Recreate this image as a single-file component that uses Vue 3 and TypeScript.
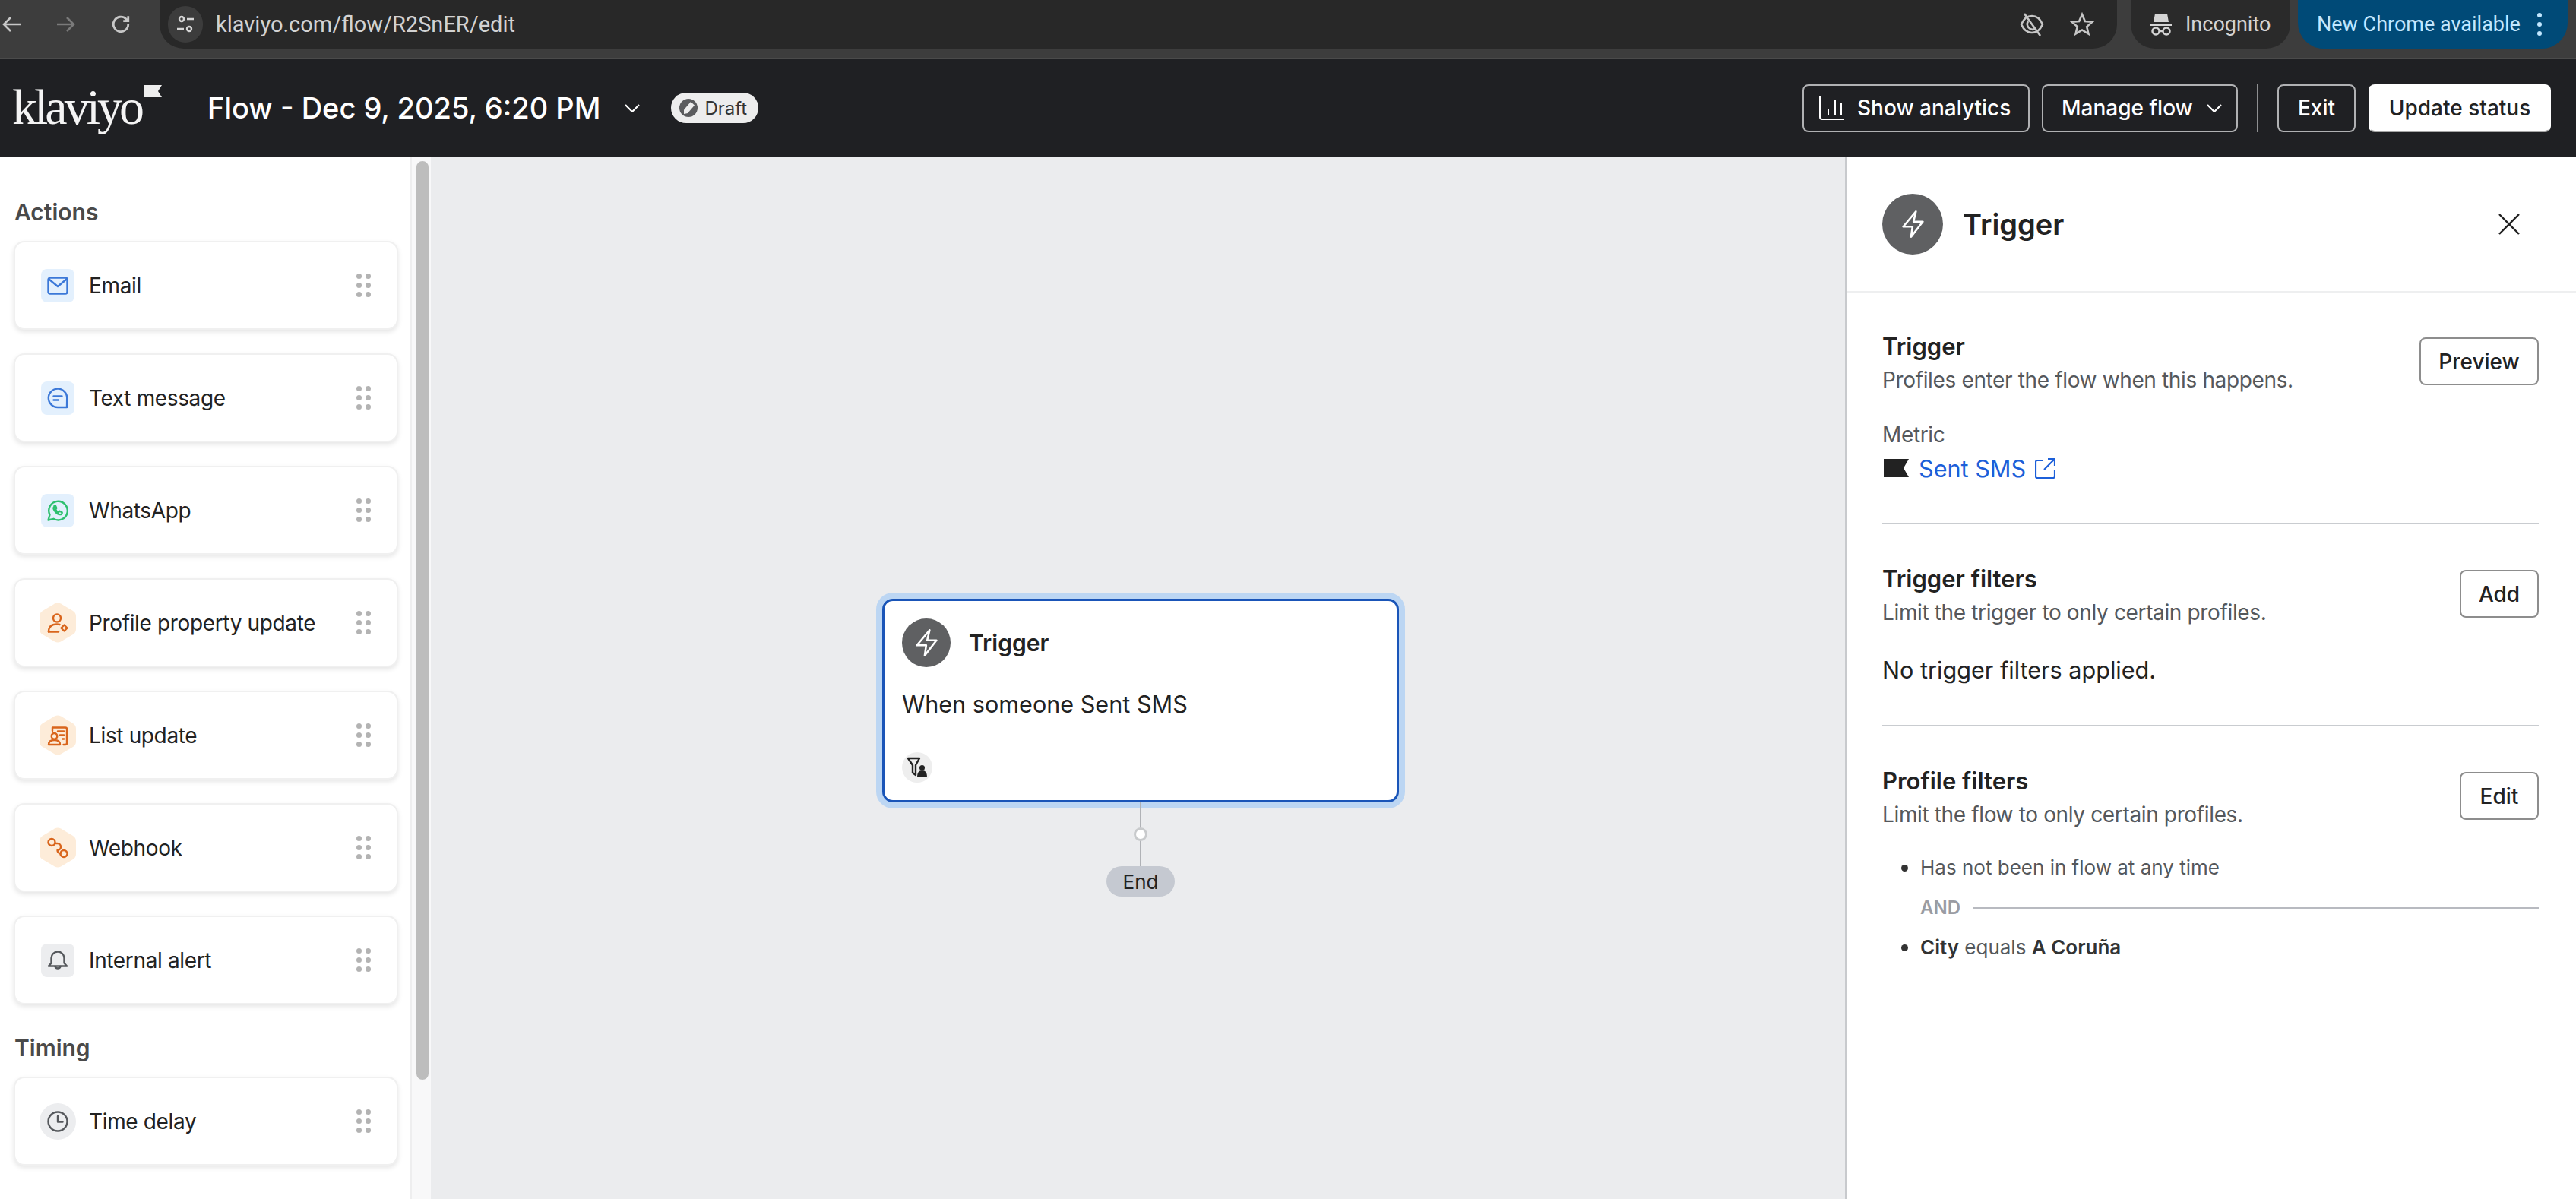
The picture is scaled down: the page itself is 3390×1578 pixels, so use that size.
<template>
  <div class="page">
    <!-- browser toolbar -->
    <div class="chrome">
      <div class="nav">
        <svg class="nav-ico back" viewBox="0 0 26 24"><path d="M25 12H3M12 3l-9 9 9 9" /></svg>
        <svg class="nav-ico fwd" viewBox="0 0 26 24"><path d="M1 12h22M14 3l9 9-9 9" /></svg>
        <svg class="nav-ico reload" viewBox="0 0 24 24"><path d="M21 12a9 9 0 1 1-2.6-6.4L21 8M21 2v6h-6" /></svg>
      </div>
      <div class="omnibox">
        <span class="site-chip">
          <svg viewBox="0 0 24 24" width="24" height="24"><circle cx="7" cy="5" r="3" /><path d="M14 5h9M1 18h9" /><circle cx="17" cy="18" r="3" /></svg>
        </span>
        <span class="url">klaviyo.com/flow/R2SnER/edit</span>
        <svg class="omni-ico" viewBox="0 0 36 32" width="36" height="32"><path d="M4 16c3-7 8-11 14-11s11 4 14 11c-3 7-8 11-14 11S7 23 4 16zM8 2l21 29M13 12a7 7 0 0 0 9 10" /></svg>
        <svg class="omni-ico star" viewBox="0 0 32 32" width="32" height="32"><path d="M16 3l3.9 9 9.6.8-7.3 6.3 2.2 9.4L16 23.4l-8.4 5.1 2.2-9.4-7.3-6.3 9.6-.8z" /></svg>
      </div>
      <div class="incognito">
        <svg viewBox="0 0 28 32" width="28" height="32"><path class="fill" d="M6 2h16l2 11H4zM0 15h28v3H0z" /><circle cx="7" cy="25" r="4.5" /><circle cx="21" cy="25" r="4.5" /><path d="M11.5 25h5" /></svg>
        <span>Incognito</span>
      </div>
      <div class="update-pill">
        <span>New Chrome available</span>
        <span class="kebab"><i></i><i></i><i></i></span>
      </div>
    </div>

    <!-- app header -->
    <header class="topbar">
      <div class="logo">
        <span class="logo-word">klaviyo</span>
        <svg class="logo-flag" viewBox="0 0 23 16" width="23" height="16"><path d="M0 0h23l-5 8 5 8H0z" /></svg>
      </div>
      <div class="flow-name">Flow - Dec 9, 2025, 6:20 PM</div>
      <svg class="chev name-chev" viewBox="0 0 20 11" width="20" height="11"><path d="M1 1l9 9 9-9" /></svg>
      <div class="draft">
        <span class="draft-dot">
          <svg viewBox="0 0 24 24" width="24" height="24"><path d="M15 4l5 4.500-9 10.500-5 1 0-5.500z" /></svg>
        </span>
        Draft
      </div>
      <div class="top-actions">
        <button class="dark-btn analytics">
          <svg viewBox="0 0 35 34" width="35" height="34"><path d="M2 1v28a3 3 0 0 0 3 3h29M13 19v7M22 6v20M30 11v15" /></svg>
          Show analytics
        </button>
        <button class="dark-btn manage">
          Manage flow
          <svg class="chev" viewBox="0 0 20 11" width="20" height="11"><path d="M1 1l9 9 9-9" /></svg>
        </button>
        <span class="top-sep"></span>
        <button class="dark-btn exit">Exit</button>
        <button class="light-btn">Update status</button>
      </div>
    </header>

    <div class="main">
      <!-- left sidebar -->
      <aside class="sidebar">
        <template v-for="group in groups" :key="group.title">
          <h3 class="group-title">{{ group.title }}</h3>
          <div v-for="item in group.items" :key="item.label" class="action-card">
            <span class="ico-slot">
              <span class="ico" :class="[item.shape, item.tone]">
                <svg viewBox="0 0 28 28" width="28" height="28">
                  <path v-for="d in icons[item.icon]" :key="d" :d="d" />
                </svg>
              </span>
            </span>
            <span class="action-label">{{ item.label }}</span>
            <span class="handle"><i v-for="n in 6" :key="n"></i></span>
          </div>
        </template>
      </aside>
      <div class="scroll-track"><div class="scroll-thumb"></div></div>

      <!-- canvas -->
      <section class="canvas">
        <div class="node">
          <div class="node-head">
            <span class="bolt-circle small">
              <svg viewBox="0 0 24 28" width="31" height="36"><path d="M15 1L2 16.500h9.500L10 27l12-15.500h-9.500z" /></svg>
            </span>
            <span class="node-title">Trigger</span>
          </div>
          <p class="node-text">When someone Sent SMS</p>
          <span class="filter-chip">
            <svg viewBox="0 0 30 30" width="30" height="30">
              <path class="funnel" d="M3 3h15l-5 9v13l-4-3V12z" />
              <path class="person" d="M15 28c0-6 2-9 6.500-9s6.500 3 6.500 9z" /><circle class="person" cx="21.500" cy="15.500" r="3.500" />
            </svg>
          </span>
        </div>
        <div class="connector"><span class="connector-dot"></span></div>
        <div class="end-pill">End</div>
      </section>

      <!-- right panel -->
      <aside class="panel">
        <div class="panel-head">
          <span class="bolt-circle">
            <svg viewBox="0 0 24 28" width="31" height="36"><path d="M15 1L2 16.500h9.500L10 27l12-15.500h-9.500z" /></svg>
          </span>
          <h2 class="panel-title">Trigger</h2>
          <svg class="close" viewBox="0 0 28 28" width="28" height="28"><path d="M1 1l26 26M27 1L1 27" /></svg>
        </div>
        <div class="panel-body">
          <div class="section">
            <div class="section-row">
              <div>
                <h4>Trigger</h4>
                <p class="sub">Profiles enter the flow when this happens.</p>
              </div>
              <button class="outline-btn preview">Preview</button>
            </div>
            <div class="metric-label">Metric</div>
            <div class="metric-value">
              <svg class="k-flag" viewBox="0 0 33 24" width="33" height="24"><path d="M0 0h33l-7 12 7 12H0z" /></svg>
              <a class="link">Sent SMS</a>
              <svg class="ext" viewBox="0 0 27 27" width="27" height="27"><path d="M11 3H3a2 2 0 0 0-2 2v19a2 2 0 0 0 2 2h21a2 2 0 0 0 2-2v-8M17 1h9v9M26 1L12 15" /></svg>
            </div>
          </div>
          <div class="section">
            <div class="section-row">
              <div>
                <h4>Trigger filters</h4>
                <p class="sub">Limit the trigger to only certain profiles.</p>
              </div>
              <button class="outline-btn small-btn">Add</button>
            </div>
            <p class="empty">No trigger filters applied.</p>
          </div>
          <div class="section last">
            <div class="section-row">
              <div>
                <h4>Profile filters</h4>
                <p class="sub">Limit the flow to only certain profiles.</p>
              </div>
              <button class="outline-btn small-btn">Edit</button>
            </div>
            <ul class="filters">
              <li><span class="bullet"></span>Has not been in flow at any time</li>
              <li class="and"><span>AND</span><span class="and-line"></span></li>
              <li><span class="bullet"></span><span><b>City</b> equals <b>A Coruña</b></span></li>
            </ul>
          </div>
        </div>
      </aside>
    </div>
  </div>
</template>

<script setup lang="ts">
interface ActionItem {
  label: string
  icon: string
  shape: 'square' | 'hex' | 'round'
  tone: 'blue' | 'green' | 'orange' | 'grey'
}

const icons: Record<string, string[]> = {
  mail: ['M4 3.500h20a2.500 2.500 0 0 1 2.500 2.500v16a2.500 2.500 0 0 1-2.500 2.500H4A2.500 2.500 0 0 1 1.500 22V6A2.500 2.500 0 0 1 4 3.500z', 'M2.500 5.500L14 15l11.500-9.500'],
  sms: ['M26 26H14A12.200 12.200 0 1 1 26.200 14z', 'M8.500 11.500h11M8.500 16.500h6.500'],
  whatsapp: ['M1.500 26.500l2-7A12.300 12.300 0 1 1 8.500 24.800z', 'M9.500 8.500c-1.500 1.500-1 4 1 6.500s5 4.500 7.500 4c1.500-.5 2-2 1.500-2.800l-3-1.500-1.500 1.500c-1.500-.5-3.500-2.500-4-4l1.300-1.500-1.300-3c-.5-.4-1-.5-1.500.3z'],
  profile: ['M13 2.500a5 5 0 1 1 0 10 5 5 0 0 1 0-10z', 'M2 25.500c0-7 4-10 11-10 1.500 0 2.500.2 3.500.5', 'M2 25.500h13', 'M22.500 16.500l4 4-4 4-4-4z'],
  list: ['M7 8V3.500h17a2 2 0 0 1 2 2V24a2 2 0 0 1-2 2h-2.500', 'M9.500 11a3.800 3.800 0 1 1 0 7.600 3.800 3.800 0 0 1 0-7.600z', 'M2 26c0-4 3-6 7.500-6s7.500 2 7.500 6z', 'M14 8.500h8M17 13.500h5M20 18.500h2'],
  webhook: ['M6 2a4.500 4.500 0 1 1 0 9 4.500 4.500 0 0 1 0-9z', 'M22 17a4.500 4.500 0 1 1 0 9 4.500 4.500 0 0 1 0-9z', 'M10 8h3.500a4.500 4.500 0 0 1 0 9 4.500 4.500 0 0 0 4 4.500'],
  bell: ['M14 2.500a8.500 8.500 0 0 1 8.500 8.500v6.500l3.500 4H2l3.500-4V11A8.500 8.500 0 0 1 14 2.500z', 'M10.500 22a3.700 3.700 0 0 0 7 0'],
  clock: ['M14 1.500a12.500 12.500 0 1 1 0 25 12.500 12.500 0 0 1 0-25z', 'M14 7v7.500h6.500'],
}

const groups: { title: string; items: ActionItem[] }[] = [
  {
    title: 'Actions',
    items: [
      { label: 'Email', icon: 'mail', shape: 'square', tone: 'blue' },
      { label: 'Text message', icon: 'sms', shape: 'square', tone: 'blue' },
      { label: 'WhatsApp', icon: 'whatsapp', shape: 'square', tone: 'green' },
      { label: 'Profile property update', icon: 'profile', shape: 'hex', tone: 'orange' },
      { label: 'List update', icon: 'list', shape: 'hex', tone: 'orange' },
      { label: 'Webhook', icon: 'webhook', shape: 'hex', tone: 'orange' },
      { label: 'Internal alert', icon: 'bell', shape: 'square', tone: 'grey' },
    ],
  },
  {
    title: 'Timing',
    items: [{ label: 'Time delay', icon: 'clock', shape: 'round', tone: 'grey' }],
  },
]
</script>

<style>
html,
body {
  margin: 0;
  overflow: hidden;
}
</style>

<style scoped>
.page {
  width: 3390px;
  height: 1578px;
  display: flex;
  flex-direction: column;
  overflow: hidden;
  font-family: Inter, 'Liberation Sans', sans-serif;
  background: #fff;
}

/* browser toolbar */
.chrome {
  height: 78px;
  box-sizing: border-box;
  flex: none;
  display: flex;
  align-items: flex-start;
  background: #3d3d3d;
  border-bottom: 2px solid #4b4b4b;
}
.nav {
  width: 210px;
  flex: none;
  height: 64px;
  display: flex;
  align-items: center;
  padding-left: 2px;
  box-sizing: border-box;
}
.nav-ico {
  fill: none;
  stroke-width: 2.6;
  stroke: #c7c7c7;
}
.back {
  width: 26px;
  height: 24px;
}
.fwd {
  width: 26px;
  height: 24px;
  margin-left: 46px;
  stroke: #7a7a7a;
}
.reload {
  width: 26px;
  height: 26px;
  margin-left: 46px;
}
.omnibox {
  width: 2576px;
  height: 64px;
  flex: none;
  display: flex;
  align-items: center;
  background: #282828;
  border-radius: 0 0 32px 32px;
  padding-left: 11px;
  padding-right: 30px;
  box-sizing: border-box;
}
.site-chip {
  width: 46px;
  height: 48px;
  border-radius: 24px;
  background: #3c3c3c;
  display: flex;
  align-items: center;
  justify-content: center;
}
.site-chip svg {
  fill: none;
  stroke: #d5d5d5;
  stroke-width: 2.4;
}
.url {
  margin-left: 17px;
  font-family: Roboto, sans-serif;
  font-size: 29px;
  color: #d2d2d2;
  flex: 1;
}
.omni-ico {
  fill: none;
  stroke: #c7c7c7;
  stroke-width: 2.6;
}
.star {
  margin-left: 32px;
}
.incognito {
  margin-left: 18px;
  width: 210px;
  height: 64px;
  flex: none;
  display: flex;
  align-items: center;
  gap: 18px;
  padding-left: 26px;
  box-sizing: border-box;
  background: #2a2a2a;
  border-radius: 0 0 32px 32px;
  font-family: Roboto, sans-serif;
  font-size: 27px;
  color: #d4d4d4;
}
.incognito svg {
  fill: none;
  stroke: #d4d4d4;
  stroke-width: 2.5;
}
.incognito .fill {
  fill: #d4d4d4;
  stroke: none;
}
.update-pill {
  margin-left: 10px;
  width: 355px;
  height: 64px;
  flex: none;
  display: flex;
  align-items: center;
  padding-left: 25px;
  box-sizing: border-box;
  background: #004a77;
  border-radius: 0 0 34px 34px;
  font-family: Roboto, sans-serif;
  font-size: 27px;
  color: #c2e7ff;
}
.kebab {
  margin-left: 22px;
  display: flex;
  flex-direction: column;
  gap: 6px;
}
.kebab i {
  width: 6px;
  height: 6px;
  border-radius: 50%;
  background: #c2e7ff;
}

/* app header */
.topbar {
  height: 128px;
  flex: none;
  display: flex;
  align-items: center;
  background: #1f2023;
  color: #fff;
  padding: 0 33px 0 18px;
  box-sizing: border-box;
}
.logo {
  width: 255px;
  flex: none;
  display: flex;
  align-items: flex-start;
  height: 60px;
}
.logo-word {
  font-family: 'Liberation Serif', serif;
  font-size: 66px;
  line-height: 60px;
  letter-spacing: -4px;
  color: #f4f4f4;
  margin: -1px 0 0 -2px;
}
.logo-flag {
  fill: #eeeeee;
  margin-left: 4px;
}
.flow-name {
  font-size: 38px;
  font-weight: 500;
  white-space: nowrap;
}
.chev {
  fill: none;
  stroke: #fff;
  stroke-width: 2.2;
}
.name-chev {
  margin-left: 32px;
}
.draft {
  margin-left: 41px;
  height: 40px;
  border-radius: 20px;
  background: #ededed;
  color: #333;
  font-size: 24px;
  display: flex;
  align-items: center;
  gap: 9px;
  padding: 0 15px 0 11px;
}
.draft-dot {
  width: 24px;
  height: 24px;
  border-radius: 50%;
  background: #5b5c5e;
  display: flex;
}
.draft-dot svg {
  fill: #ededed;
}
.top-actions {
  margin-left: auto;
  display: flex;
  align-items: center;
}
.dark-btn,
.light-btn {
  height: 63px;
  border-radius: 8px;
  font-family: inherit;
  font-size: 28px;
  font-weight: 500;
  display: flex;
  align-items: center;
  box-sizing: border-box;
  white-space: nowrap;
}
.dark-btn {
  background: transparent;
  color: #fff;
  border: 2px solid #b0b1b3;
}
.analytics {
  width: 299px;
  padding: 0 0 0 19px;
  gap: 16px;
}
.analytics svg {
  fill: none;
  stroke: #fff;
  stroke-width: 2;
}
.manage {
  width: 258px;
  margin-left: 16px;
  padding: 0 0 0 24px;
  gap: 18px;
}
.top-sep {
  width: 2px;
  height: 64px;
  background: #8e8f91;
  margin: 0 25px;
}
.exit {
  width: 103px;
  justify-content: center;
}
.light-btn {
  width: 240px;
  margin-left: 17px;
  justify-content: center;
  background: #fff;
  color: #222;
  border: 2px solid #fff;
  border-bottom-color: #a5a5a5;
}

.main {
  flex: 1;
  display: flex;
  min-height: 0;
}

/* sidebar */
.sidebar {
  width: 542px;
  flex: none;
  box-sizing: border-box;
  padding: 53px 16px 0 18px;
  border-right: 2px solid #eeeeef;
  overflow: hidden;
}
.group-title {
  margin: 0 0 18px 1px;
  font-size: 30px;
  line-height: 40px;
  font-weight: 600;
  color: #4a4a4a;
}
.action-card {
  height: 117px;
  box-sizing: border-box;
  margin-bottom: 31px;
  border: 2px solid #f0f0f0;
  border-radius: 14px;
  background: #fff;
  box-shadow: 0 3px 6px rgba(0, 0, 0, 0.1);
  display: flex;
  align-items: center;
  padding: 0 34px 0 32px;
}
.action-card + .group-title {
  margin-top: 37px;
}
.ico-slot {
  width: 48px;
  display: flex;
  justify-content: center;
  flex: none;
}
.ico {
  display: flex;
  align-items: center;
  justify-content: center;
}
.ico svg {
  fill: none;
  stroke-width: 2.4;
  stroke-linecap: round;
  stroke-linejoin: round;
}
.square {
  width: 44px;
  height: 44px;
  border-radius: 8px;
}
.round {
  width: 48px;
  height: 48px;
  border-radius: 50%;
}
.hex {
  width: 48px;
  height: 53px;
  clip-path: path('M20 1.5Q24 -0.5 28 1.5L44 11Q48 13.5 48 18L48 35Q48 39.5 44 42L28 51.5Q24 53.5 20 51.5L4 42Q0 39.5 0 35L0 18Q0 13.5 4 11Z');
}
.blue {
  background: #e3f0fd;
  stroke: #3b78d8;
}
.green {
  background: #e3f0fd;
  stroke: #2ec06f;
}
.orange {
  background: #fdecd9;
  stroke: #d9651c;
}
.grey {
  background: #ecedef;
  stroke: #55585c;
}
.action-label {
  margin-left: 17px;
  flex: 1;
  font-size: 28px;
  letter-spacing: -0.36px;
  color: #222;
  white-space: nowrap;
}
.handle {
  display: grid;
  grid-template-columns: 7px 7px;
  column-gap: 5px;
  row-gap: 5px;
  flex: none;
}
.handle i {
  width: 7px;
  height: 7px;
  border-radius: 50%;
  background: #b3b3b3;
}

.scroll-track {
  width: 25px;
  flex: none;
  background: #f8f8f9;
}
.scroll-thumb {
  width: 16px;
  height: 1209px;
  margin: 6px 0 0 6px;
  border-radius: 8px;
  background: #bdbdbd;
}

/* canvas */
.canvas {
  flex: 1;
  background: #ebecee;
  display: flex;
  flex-direction: column;
  align-items: center;
  padding: 582px 0 0 7px;
  box-sizing: border-box;
}
.node {
  width: 680px;
  height: 268px;
  flex: none;
  box-sizing: border-box;
  background: #fff;
  border: 3px solid #1a55b8;
  border-radius: 14px;
  box-shadow: 0 0 0 8px #bcd6f3;
  padding: 23px;
}
.node-head {
  display: flex;
  align-items: center;
  gap: 24px;
}
.bolt-circle {
  width: 80px;
  height: 80px;
  flex: none;
  border-radius: 50%;
  background: #5f6062;
  display: flex;
  align-items: center;
  justify-content: center;
}
.bolt-circle.small {
  width: 64px;
  height: 64px;
}
.bolt-circle svg {
  fill: none;
  stroke: #fff;
  stroke-width: 2;
  stroke-linejoin: round;
}
.node-title {
  font-size: 30px;
  font-weight: 600;
  color: #222;
}
.node-text {
  margin: 29px 0 43px;
  font-size: 30.6px;
  line-height: 40px;
  color: #222;
}
.filter-chip {
  width: 40px;
  height: 40px;
  border-radius: 50%;
  background: #eeeeee;
  display: flex;
  align-items: center;
  justify-content: center;
}
.funnel {
  fill: none;
  stroke: #222;
  stroke-width: 2.4;
  stroke-linejoin: round;
}
.person {
  fill: #222;
}
.connector {
  position: relative;
  width: 2px;
  height: 84px;
  flex: none;
  background: #b0b2b6;
}
.connector-dot {
  position: absolute;
  left: -8px;
  top: 33px;
  width: 18px;
  height: 18px;
  box-sizing: border-box;
  border: 3px solid #c8cacc;
  border-radius: 50%;
  background: #fff;
}
.end-pill {
  width: 90px;
  height: 40px;
  flex: none;
  border-radius: 20px;
  background: #c5c9d1;
  color: #222;
  font-size: 26px;
  display: flex;
  align-items: center;
  justify-content: center;
}

/* right panel */
.panel {
  width: 962px;
  flex: none;
  box-sizing: border-box;
  border-left: 2px solid #c8cacd;
  background: #fff;
}
.panel-head {
  height: 179px;
  box-sizing: border-box;
  border-bottom: 2px solid #eeeff0;
  display: flex;
  align-items: center;
  padding: 0 74px 0 47px;
}
.panel-title {
  margin: 0 0 0 26px;
  flex: 1;
  font-size: 38px;
  font-weight: 600;
  color: #222;
}
.close {
  fill: none;
  stroke: #222;
  stroke-width: 2.4;
}
.panel-body {
  padding: 0 49px 0 47px;
}
.section {
  padding: 51px 0 52px;
  border-bottom: 2px solid #c9ccd0;
}
.section + .section {
  padding-top: 52px;
}
.section.last {
  border-bottom: none;
}
.section-row {
  display: flex;
  align-items: flex-start;
  justify-content: space-between;
}
h4 {
  margin: 0 0 4px;
  font-size: 31px;
  line-height: 40px;
  font-weight: 600;
  color: #222;
}
.sub {
  margin: 0;
  font-size: 28px;
  letter-spacing: -0.36px;
  line-height: 40px;
  color: #55585c;
}
.outline-btn {
  margin-top: 8px;
  height: 63px;
  border: 2px solid #8d8d8d;
  border-radius: 8px;
  background: #fff;
  color: #222;
  font-family: inherit;
  font-size: 28px;
  font-weight: 500;
  box-sizing: border-box;
}
.preview {
  width: 157px;
}
.small-btn {
  width: 104px;
}
.metric-label {
  margin-top: 32px;
  font-size: 28px;
  letter-spacing: -0.36px;
  line-height: 40px;
  color: #55585c;
}
.metric-value {
  margin-top: 4px;
  height: 40px;
  display: flex;
  align-items: center;
}
.k-flag {
  margin-left: 2px;
  fill: #222;
}
.link {
  margin-left: 13px;
  font-size: 30.6px;
  color: #1c5fd9;
}
.ext {
  margin-left: 12px;
  fill: none;
  stroke: #1c5fd9;
  stroke-width: 2.2;
}
.empty {
  margin: 36px 0 0;
  font-size: 30.6px;
  line-height: 40px;
  color: #222;
}
.filters {
  list-style: none;
  margin: 32px 0 0;
  padding: 0;
  font-size: 26px;
  line-height: 36px;
  color: #55585c;
}
.filters li {
  display: flex;
  align-items: center;
}
.filters b {
  font-weight: 600;
  color: #333;
}
.bullet {
  width: 9px;
  height: 9px;
  margin: 0 16px 0 25px;
  border-radius: 50%;
  background: #333;
  flex: none;
}
.filters .and {
  height: 69px;
  padding-left: 50px;
  gap: 17px;
  font-size: 24px;
  font-weight: 600;
  color: #9a9ca3;
}
.and-line {
  flex: 1;
  height: 2px;
  background: #b8bac0;
}
</style>
